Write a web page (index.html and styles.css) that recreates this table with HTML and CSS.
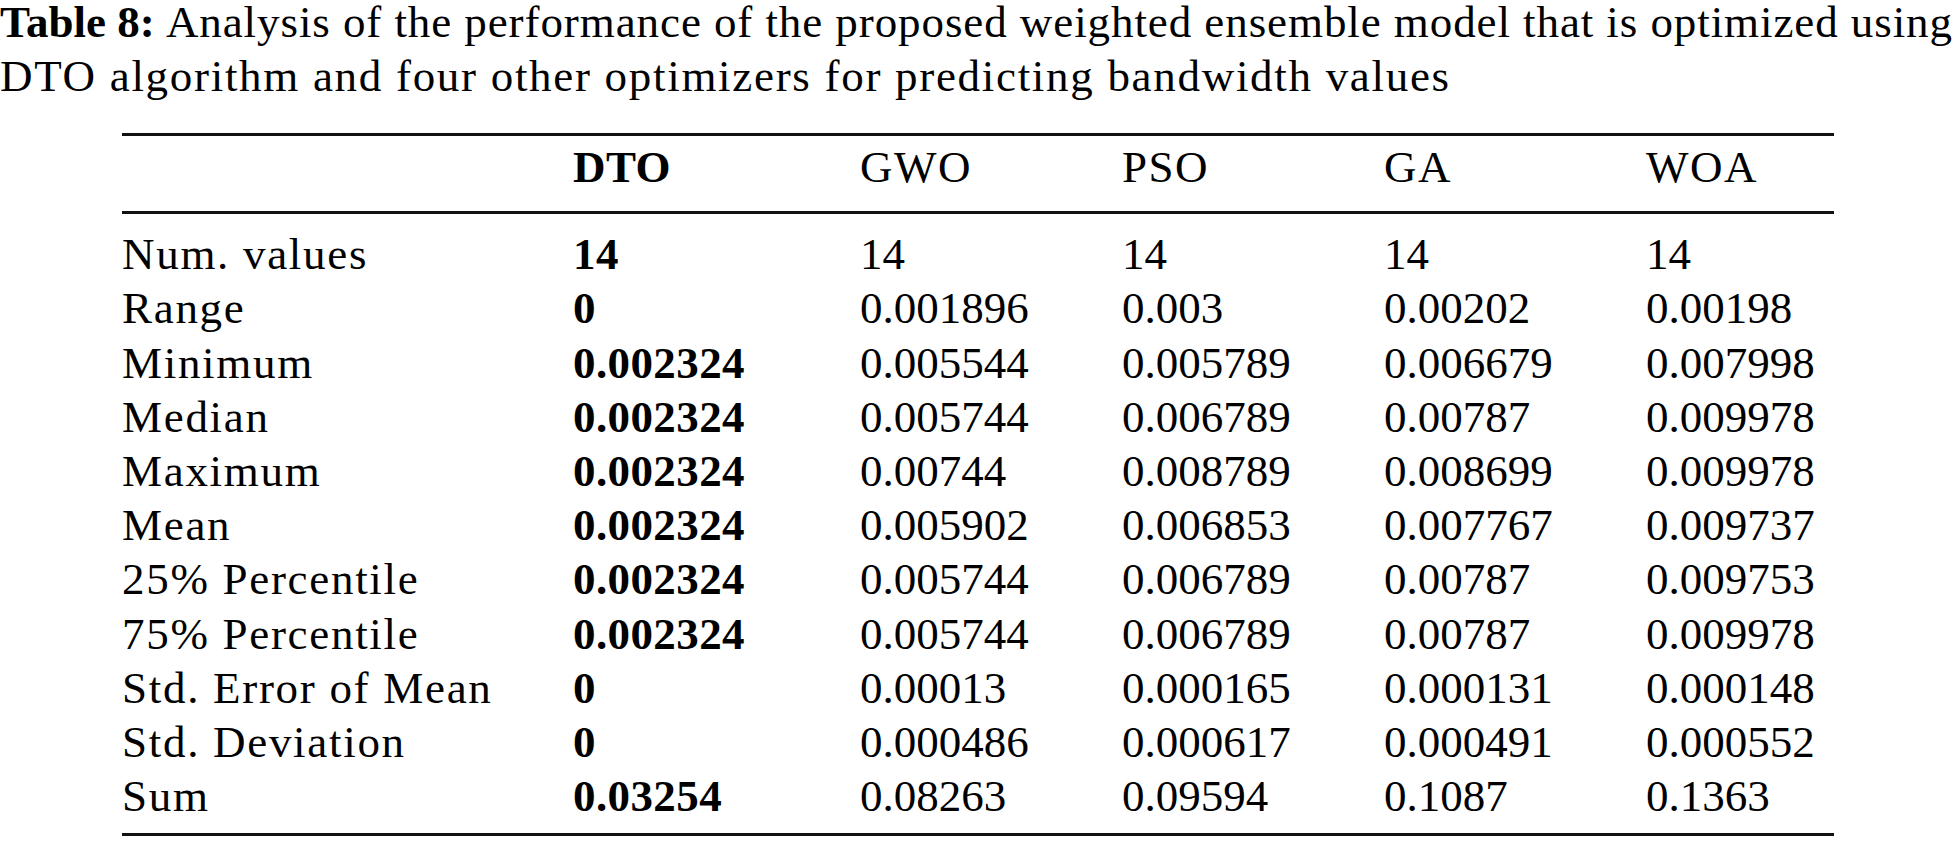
FILE: index.html
```html
<!DOCTYPE html>
<html lang="en">
<head>
<meta charset="utf-8">
<title>Table 8</title>
<link rel="stylesheet" href="styles.css">
</head>
<body>
<div class="caption">
  <span class="caption-line"><strong>Table 8:</strong> <span class="first-text">Analysis of the performance of the proposed weighted ensemble model that is optimized using</span></span>
  <span class="caption-line second">DTO algorithm and four other optimizers for predicting bandwidth values</span>
</div>
<table class="stats">
  <colgroup>
    <col class="c-label">
    <col class="c-dto">
    <col class="c-opt">
    <col class="c-opt">
    <col class="c-opt">
    <col class="c-last">
  </colgroup>
  <thead>
    <tr>
      <th></th>
      <th class="best">DTO</th>
      <th>GWO</th>
      <th>PSO</th>
      <th>GA</th>
      <th>WOA</th>
    </tr>
  </thead>
  <tbody>
    <tr><td class="label">Num. values</td><td class="best">14</td><td>14</td><td>14</td><td>14</td><td>14</td></tr>
    <tr><td class="label">Range</td><td class="best">0</td><td>0.001896</td><td>0.003</td><td>0.00202</td><td>0.00198</td></tr>
    <tr><td class="label">Minimum</td><td class="best">0.002324</td><td>0.005544</td><td>0.005789</td><td>0.006679</td><td>0.007998</td></tr>
    <tr><td class="label">Median</td><td class="best">0.002324</td><td>0.005744</td><td>0.006789</td><td>0.00787</td><td>0.009978</td></tr>
    <tr><td class="label">Maximum</td><td class="best">0.002324</td><td>0.00744</td><td>0.008789</td><td>0.008699</td><td>0.009978</td></tr>
    <tr><td class="label">Mean</td><td class="best">0.002324</td><td>0.005902</td><td>0.006853</td><td>0.007767</td><td>0.009737</td></tr>
    <tr><td class="label">25% Percentile</td><td class="best">0.002324</td><td>0.005744</td><td>0.006789</td><td>0.00787</td><td>0.009753</td></tr>
    <tr><td class="label">75% Percentile</td><td class="best">0.002324</td><td>0.005744</td><td>0.006789</td><td>0.00787</td><td>0.009978</td></tr>
    <tr><td class="label">Std. Error of Mean</td><td class="best">0</td><td>0.00013</td><td>0.000165</td><td>0.000131</td><td>0.000148</td></tr>
    <tr><td class="label">Std. Deviation</td><td class="best">0</td><td>0.000486</td><td>0.000617</td><td>0.000491</td><td>0.000552</td></tr>
    <tr><td class="label">Sum</td><td class="best">0.03254</td><td>0.08263</td><td>0.09594</td><td>0.1087</td><td>0.1363</td></tr>
  </tbody>
</table>
</body>
</html>
```
FILE: styles.css
```css
html, body {
  margin: 0;
  padding: 0;
  background: #ffffff;
  color: #000000;
  font-family: "Liberation Serif", "Times New Roman", serif;
  font-size: 45px;
}

.caption {
  margin-top: -5px;
  line-height: 54px;
}

.caption-line {
  display: block;
  white-space: nowrap;
}

.caption strong {
  font-weight: bold;
}

.caption .first-text {
  letter-spacing: 0.92px;
}

.caption .second {
  letter-spacing: 1.7px;
}

.stats {
  margin: 30px 0 0 122px;
  width: 1712px;
  table-layout: fixed;
  border-collapse: collapse;
  border-spacing: 0;
  line-height: 54.2px;
}

.c-label { width: 451px; }
.c-dto { width: 287px; }
.c-opt { width: 262px; }
.c-last { width: 188px; }

.stats th,
.stats td {
  padding: 0;
  text-align: left;
  vertical-align: top;
  white-space: nowrap;
}

.stats th {
  font-weight: normal;
  letter-spacing: 1.5px;
  padding-top: 4px;
  padding-bottom: 17px;
}

.stats thead tr {
  border-top: 3px solid #111;
  border-bottom: 3px solid #111;
}

.stats tbody {
  border-bottom: 3px solid #111;
}

.stats tbody tr:first-child td {
  padding-top: 13px;
}

.stats tbody tr:last-child td {
  padding-bottom: 10px;
}

.stats .label {
  letter-spacing: 1.7px;
}

.stats .best {
  font-weight: bold;
  letter-spacing: 0.4px;
}
```
